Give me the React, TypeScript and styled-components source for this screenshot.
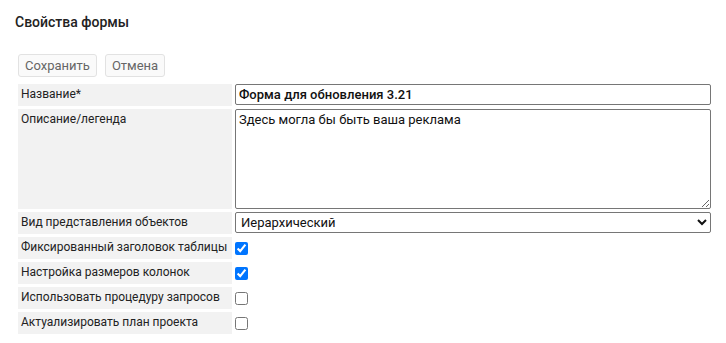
import React from "react";
import styled, { createGlobalStyle } from "styled-components";

const Global = createGlobalStyle`
  html, body { margin: 0; padding: 0; background: #fff; }
  body { font-family: Roboto, "Liberation Sans", Arial, sans-serif; color: #222; }
  * { box-sizing: border-box; }
`;

const Page = styled.div`
  padding: 12px 15px 0 15px;
  width: 726px;
`;

const Title = styled.h1`
  margin: 0;
  font-size: 14px;
  line-height: 20px;
  font-weight: 500;
  color: #222;
`;

const Toolbar = styled.div`
  display: flex;
  gap: 8px;
  margin: 22px 0 0 3px;
`;

const Button = styled.button`
  height: 23px;
  padding: 0 6px;
  font-family: inherit;
  font-size: 13px;
  color: #666;
  background: #fafafa;
  border: 1px solid #e2e2e2;
  border-radius: 3px;
  cursor: pointer;
`;

const Form = styled.div`
  display: grid;
  grid-template-columns: 214px 476px;
  column-gap: 3px;
  row-gap: 3px;
  margin: 7px 0 0 3px;
`;

const Label = styled.div<{ $tall?: boolean }>`
  background: #f2f2f2;
  font-size: 12px;
  line-height: 16px;
  padding: 2px 3px;
  height: ${(p) => (p.$tall ? "100px" : "22px")};
  color: #222;
  white-space: nowrap;
  overflow: hidden;
`;

const Cell = styled.div`
  display: flex;
  align-items: flex-start;
`;

const TextInput = styled.input`
  width: 476px;
  height: 21px;
  margin: 0;
  padding: 0 3px;
  font-family: "Roboto Medium", Roboto, "Liberation Sans", Arial, sans-serif;
  font-size: 13px;
  font-weight: 400;
  color: #111;
  border: 1px solid #767676;
  border-radius: 2px;
  background: #fff;
`;

const TextArea = styled.textarea`
  width: 476px;
  height: 100px;
  margin: 0;
  padding: 2px 3px;
  font-family: inherit;
  font-size: 13px;
  color: #111;
  border: 1px solid #767676;
  border-radius: 2px;
  resize: both;
`;

const Select = styled.select`
  width: 476px;
  height: 21px;
  margin: 0;
  padding: 0 0 0 1px;
  font-family: inherit;
  font-size: 13px;
  color: #111;
  border: 1px solid #767676;
  border-radius: 2px;
  background: #fff;
`;

const Check = styled.input`
  width: 13px;
  height: 13px;
  margin: 5px 0 0 0;
`;

const checks = [
  { label: "Фиксированный заголовок таблицы", checked: true },
  { label: "Настройка размеров колонок", checked: true },
  { label: "Использовать процедуру запросов", checked: false },
  { label: "Актуализировать план проекта", checked: false },
];

export default function App() {
  return (
    <Page>
      <Global />
      <Title>Свойства формы</Title>
      <Toolbar>
        <Button>Сохранить</Button>
        <Button>Отмена</Button>
      </Toolbar>
      <Form>
        <Label>Название*</Label>
        <Cell>
          <TextInput defaultValue="Форма для обновления 3.21" />
        </Cell>
        <Label $tall>Описание/легенда</Label>
        <Cell>
          <TextArea defaultValue="Здесь могла бы быть ваша реклама" />
        </Cell>
        <Label>Вид представления объектов</Label>
        <Cell>
          <Select defaultValue="h">
            <option value="h">Иерархический</option>
            <option value="l">Списком</option>
          </Select>
        </Cell>
        {checks.map((c) => (
          <React.Fragment key={c.label}>
            <Label>{c.label}</Label>
            <Cell>
              <Check type="checkbox" defaultChecked={c.checked} />
            </Cell>
          </React.Fragment>
        ))}
      </Form>
    </Page>
  );
}
